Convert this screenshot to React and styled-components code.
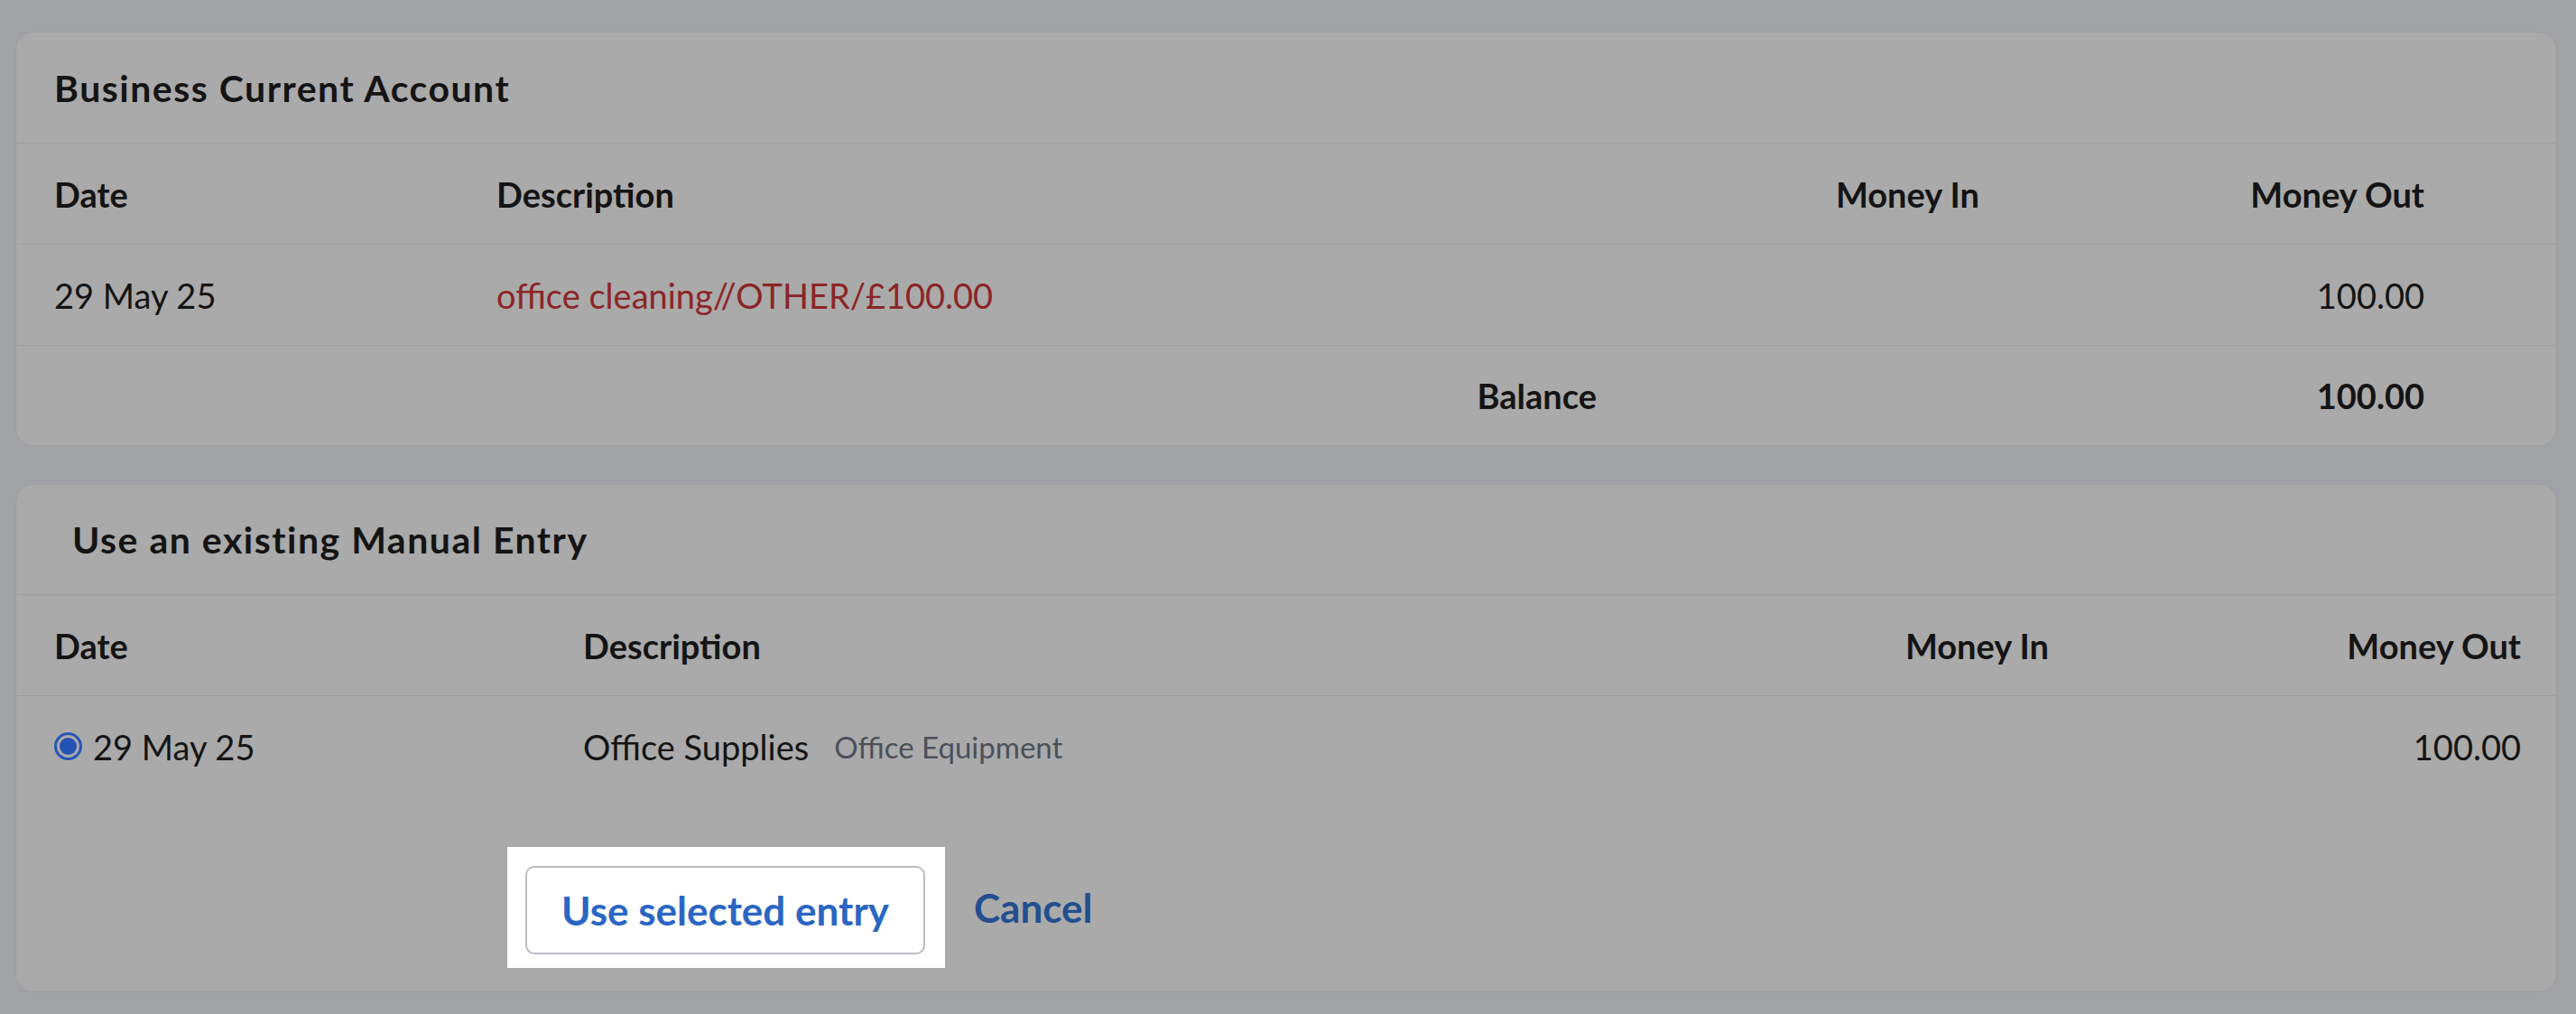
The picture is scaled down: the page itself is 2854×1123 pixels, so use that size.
import React from 'react';
import styled, {createGlobalStyle} from 'styled-components'

const GlobalStyle = createGlobalStyle`
    body{
        margin:0;
        background:#a0a2a6;
        font-family:'Lato', 'Liberation Sans', sans-serif;
        color:#141414;
    }
`

const Page = styled.div`
    display:flex;
    flex-direction:column;
    gap:42px;
    padding:35px 21px 0 17px;
`

const Card = styled.section`
    background:#aaaaaa;
    border:1px solid #9c9ea2;
    border-radius:20px;
    overflow:hidden;
`

const CardTitle = styled.h2`
    margin:0;
    height:${p => p.h}px;
    display:flex;
    align-items:center;
    padding-left:${p => p.indent}px;
    border-bottom:1px solid #9c9ea2;
    font-size:41px;
    font-weight:700;
    letter-spacing:1.5px;
`

const Row = styled.div`
    display:grid;
    grid-template-columns:${p => p.cols};
    align-items:center;
    height:${p => p.h || 111}px;
    padding-left:42px;
    border-bottom:${p => p.last ? 'none' : '1px solid #9c9ea2'};
    font-size:38px;
    font-weight:${p => p.head ? 700 : 400};
`

const Cell = styled.div`
    text-align:${p => p.right ? 'right' : 'left'};
    padding-right:${p => p.pr || 0}px;
    font-weight:${p => p.bold ? 700 : 'inherit'};
    display:flex;
    align-items:center;
    justify-content:${p => p.right ? 'flex-end' : 'flex-start'};
`

const RedLink = styled.span`
    color:#8c2525;
`

const Category = styled.span`
    margin-left:28px;
    font-size:33px;
    color:#4b5059;
`

const Radio = styled.span`
    width:31px;
    height:31px;
    box-sizing:border-box;
    border:3px solid #2755b8;
    border-radius:50%;
    margin-right:12px;
    display:inline-flex;
    align-items:center;
    justify-content:center;
    &::after{
        content:'';
        width:19px;
        height:19px;
        border-radius:50%;
        background:#2452b5;
    }
`

const Actions = styled.div`
    display:flex;
    align-items:center;
    padding:56px 0 26px 544px;
`

const Spotlight = styled.div`
    background:#ffffff;
    padding:21px 22px 15px 20px;
`

const Button = styled.button`
    width:443px;
    height:98px;
    background:#ffffff;
    border:2px solid #b9bdc4;
    border-radius:10px;
    color:#2a66c2;
    font-family:inherit;
    font-size:44px;
    font-weight:700;
    cursor:pointer;
`

const Cancel = styled.a`
    margin-left:32px;
    color:#224f8f;
    font-size:44px;
    font-weight:700;
    cursor:pointer;
`

const accountCols = '490px 1fr 393px 493px 146px'
const entryCols = '586px 1fr 400px 523px 39px'

const App = () => {
    return(
        <>
        <GlobalStyle/>
        <Page>
            <Card>
                <CardTitle h={122} indent={42}>Business Current Account</CardTitle>
                <Row cols={accountCols} head>
                    <Cell>Date</Cell>
                    <Cell>Description</Cell>
                    <Cell right>Money In</Cell>
                    <Cell right>Money Out</Cell>
                    <Cell/>
                </Row>
                <Row cols={accountCols}>
                    <Cell>29 May 25</Cell>
                    <Cell><RedLink>office cleaning//OTHER/£100.00</RedLink></Cell>
                    <Cell right/>
                    <Cell right>100.00</Cell>
                    <Cell/>
                </Row>
                <Row cols={accountCols} h={110} last>
                    <Cell/>
                    <Cell right bold pr={31}>Balance</Cell>
                    <Cell right/>
                    <Cell right bold>100.00</Cell>
                    <Cell/>
                </Row>
            </Card>
            <Card>
                <CardTitle h={121} indent={62}>Use an existing Manual Entry</CardTitle>
                <Row cols={entryCols} head>
                    <Cell>Date</Cell>
                    <Cell>Description</Cell>
                    <Cell right>Money In</Cell>
                    <Cell right>Money Out</Cell>
                    <Cell/>
                </Row>
                <Row cols={entryCols} last>
                    <Cell><Radio/>29 May 25</Cell>
                    <Cell>Office Supplies<Category>Office Equipment</Category></Cell>
                    <Cell right/>
                    <Cell right>100.00</Cell>
                    <Cell/>
                </Row>
                <Actions>
                    <Spotlight>
                        <Button>Use selected entry</Button>
                    </Spotlight>
                    <Cancel>Cancel</Cancel>
                </Actions>
            </Card>
        </Page>
        </>
    )
}

export default App
